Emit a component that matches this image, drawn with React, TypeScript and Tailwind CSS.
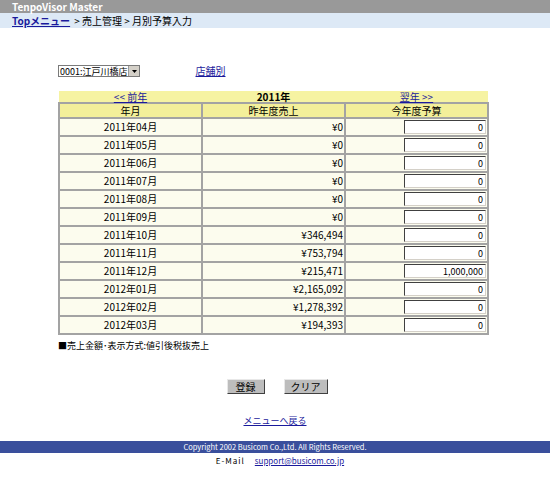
import React from "react";

const rows = [
  { month: "2011年04月", last: "¥0", budget: "0" },
  { month: "2011年05月", last: "¥0", budget: "0" },
  { month: "2011年06月", last: "¥0", budget: "0" },
  { month: "2011年07月", last: "¥0", budget: "0" },
  { month: "2011年08月", last: "¥0", budget: "0" },
  { month: "2011年09月", last: "¥0", budget: "0" },
  { month: "2011年10月", last: "¥346,494", budget: "0" },
  { month: "2011年11月", last: "¥753,794", budget: "0" },
  { month: "2011年12月", last: "¥215,471", budget: "1,000,000" },
  { month: "2012年01月", last: "¥2,165,092", budget: "0" },
  { month: "2012年02月", last: "¥1,278,392", budget: "0" },
  { month: "2012年03月", last: "¥194,393", budget: "0" },
];

const font = { fontFamily: '"Noto Sans CJK JP", "Liberation Sans", sans-serif' };

const App = () => {
  return (
    <div className="w-[550px] h-[477px] bg-white text-black text-[10px] leading-none overflow-hidden" style={font}>
      {/* title bars */}
      <div className="h-[13px] bg-[#999999] flex items-center pl-[12px] text-white font-bold text-[10px]">
        TenpoVisor Master
      </div>
      <div className="h-[15px] bg-[#dde9f6] flex items-center pl-[12px] gap-[4px] text-[10px]">
        <a className="text-[#1a1a9c] underline font-bold">Topメニュー</a>
        <span>&gt; 売上管理 &gt; 月別予算入力</span>
      </div>

      {/* shop select */}
      <div className="flex items-center pl-[58px] mt-[37px] h-[12px]">
        <div className="flex items-center h-[12px] border border-[#7a7a7a] bg-white">
          <span className="px-[1px] text-[9px]">0001:江戸川橋店</span>
          <span className="w-[11px] h-[10px] bg-[#d4d0c8] border-l border-[#999] flex items-center justify-center">
            <svg width="5" height="3" viewBox="0 0 5 3"><path d="M0 0h5L2.5 3z" fill="#000" /></svg>
          </span>
        </div>
        <a className="ml-[55px] text-[#1a1a9c] underline text-[10px]">店舗別</a>
      </div>

      {/* budget table */}
      <div className="pl-[58px] mt-[14px]">
        <table className="w-[431px] border-collapse table-fixed">
          <tbody>
            <tr className="h-[12px] bg-[#f6f3a2]">
              <td className="text-center">
                <a className="text-[#1a1a9c] underline">&lt;&lt; 前年</a>
              </td>
              <td className="text-center font-bold">2011年</td>
              <td className="text-center">
                <a className="text-[#1a1a9c] underline">翌年 &gt;&gt;</a>
              </td>
            </tr>
            <tr className="h-[15px] bg-[#f3ef9a]">
              <td className="border-2 border-[#a3a3a3] text-center">年月</td>
              <td className="border-2 border-[#a3a3a3] text-center">昨年度売上</td>
              <td className="border-2 border-[#a3a3a3] text-center">今年度予算</td>
            </tr>
            {rows.map((r) => (
              <tr key={r.month} className="h-[18px] bg-[#fcfcee]">
                <td className="border-2 border-[#a3a3a3] text-center">{r.month}</td>
                <td className="border-2 border-[#a3a3a3] text-right pr-[1px]">{r.last}</td>
                <td className="border-2 border-[#a3a3a3] pr-[1px]">
                  <div className="flex justify-end">
                    <div className="w-[82px] h-[14px] bg-white border border-t-[#404040] border-l-[#404040] border-r-[#d4d0c8] border-b-[#d4d0c8] flex items-center justify-end pr-[2px] text-[9px]">
                      {r.budget}
                    </div>
                  </div>
                </td>
              </tr>
            ))}
          </tbody>
        </table>
        <div className="mt-[6px] text-[9px]">■売上金額･表示方式:値引後税抜売上</div>
      </div>

      {/* buttons */}
      <div className="flex justify-center gap-[19px] mt-[29px] pl-[4px]">
        <button className="w-[38px] h-[15px] bg-[#bdbdbd] border border-t-[#e8e8e8] border-l-[#e8e8e8] border-r-[#404040] border-b-[#404040] text-[10px]">
          登録
        </button>
        <button className="w-[44px] h-[15px] bg-[#bdbdbd] border border-t-[#e8e8e8] border-l-[#e8e8e8] border-r-[#404040] border-b-[#404040] text-[10px]">
          クリア
        </button>
      </div>

      <div className="flex justify-center mt-[22px]">
        <a className="text-[#1a1a9c] underline text-[9px]">メニューへ戻る</a>
      </div>

      {/* footer */}
      <div className="mt-[16px] h-[12px] bg-[#3a4f9c] flex items-center justify-center text-white text-[7.5px]">
        Copyright 2002 Busicom Co.,Ltd. All Rights Reserved.
      </div>
      <div className="flex justify-center items-center gap-[10px] mt-[4px] pl-[10px] text-[8px]">
        <span className="tracking-[1px]">E-Mail</span>
        <a className="text-[#1a1a9c] underline">support@busicom.co.jp</a>
      </div>
    </div>
  );
};

export default App;
